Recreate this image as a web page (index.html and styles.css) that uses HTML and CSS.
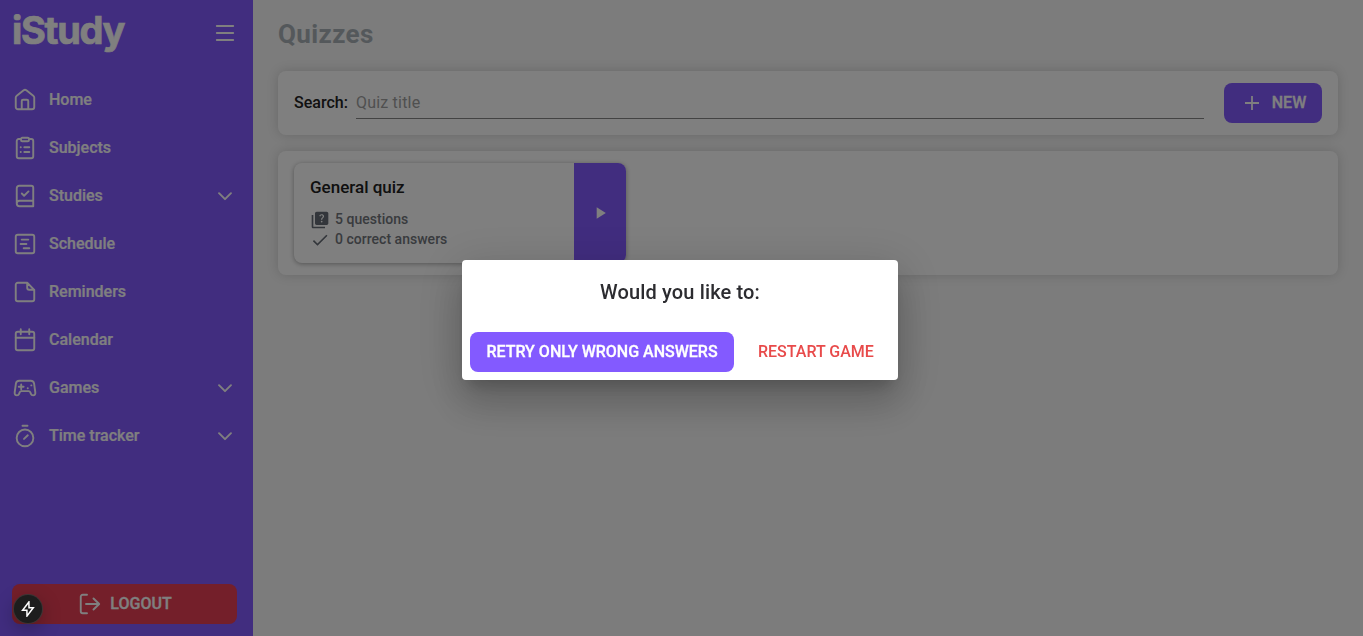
FILE: index.html
```html
<!DOCTYPE html>
<html lang="en">
<head>
<meta charset="utf-8">
<title>iStudy - Quizzes</title>
<link rel="stylesheet" href="styles.css">
</head>
<body>
<div class="app">
  <aside class="sidebar">
    <div class="brand">
      <span class="logo">iStudy</span>
      <svg class="menu" viewBox="0 0 24 24"><path d="M3.800 5h16.400M3.800 12h16.400M3.800 19h16.400"/></svg>
    </div>
    <nav class="nav">
      <a class="item"><svg viewBox="0 0 24 24"><path d="M2.750 9.600c0-.8.35-1.400 1-1.900l6.900-5.400c.8-.65 1.900-.65 2.700 0l6.900 5.400c.65.5 1 1.100 1 1.900v9.400c0 1.300-.95 2.250-2.250 2.250H5c-1.300 0-2.250-.95-2.250-2.250zM8.750 21v-7.900c0-.8.55-1.350 1.350-1.350h3.800c.8 0 1.350.55 1.350 1.350V21"/></svg><span>Home</span></a>
      <a class="item"><svg viewBox="0 0 24 24"><path d="M8 3H5.750a2 2 0 0 0-2 2v15.250a2 2 0 0 0 2 2h12.500a2 2 0 0 0 2-2V5a2 2 0 0 0-2-2H16M9.300 1.750h5.400c.8 0 1.300.5 1.300 1.300v.9c0 .8-.5 1.300-1.300 1.300H9.300c-.8 0-1.300-.5-1.300-1.300v-.9c0-.8.5-1.300 1.300-1.300zM11.300 11.200h5M11.300 16h5M7.700 11.200h.1M7.700 16h.1"/></svg><span>Subjects</span></a>
      <a class="item"><svg viewBox="0 0 24 24"><path d="M3.750 19.500V4.250a2.500 2.500 0 0 1 2.500-2.500h12a2 2 0 0 1 2 2v18.500H6.500a2.750 2.750 0 0 1 0-5.500h13.750M8.800 9.500l2.300 2.200 4.400-4.300"/></svg><span>Studies</span><svg class="chevron" viewBox="0 0 24 24"><path d="M6 9.200l6 6 6-6"/></svg></a>
      <a class="item"><svg viewBox="0 0 24 24"><rect x="2.750" y="2.750" width="18.500" height="18.500" rx="2"/><path d="M8.700 7.600h6.600M7.600 12h5.800M10.700 16.300h5.600"/></svg><span>Schedule</span></a>
      <a class="item"><svg viewBox="0 0 24 24"><path d="M14.200 2.750H4.750a2 2 0 0 0-2 2v14.500a2 2 0 0 0 2 2h14.500a2 2 0 0 0 2-2V9.800zM14.200 2.750v5.050a2 2 0 0 0 2 2h5.050"/></svg><span>Reminders</span></a>
      <a class="item"><svg viewBox="0 0 24 24"><rect x="2.750" y="3.750" width="18.500" height="18.500" rx="2"/><path d="M2.750 9.750h18.500M7.750 1.250v5M16.250 1.250v5"/></svg><span>Calendar</span></a>
      <a class="item"><svg viewBox="0 0 24 24"><path d="M6.200 4.750h11.600c1.800 0 3 1 3.300 2.800l1.200 8.700c.3 2.100-.7 3.100-2.200 3.100-1.100 0-1.800-.5-2.200-1.500l-.6-1.600c-.3-.8-.9-1.100-1.700-1.100H8.400c-.8 0-1.400.3-1.700 1.100l-.6 1.600c-.4 1-1.100 1.500-2.200 1.500-1.500 0-2.500-1-2.200-3.100l1.200-8.700c.3-1.800 1.500-2.800 3.300-2.800zM8.200 8.400v4.800M5.800 10.800h4.800M14.700 12.200h.1M18.300 9.400h.1"/></svg><span>Games</span><svg class="chevron" viewBox="0 0 24 24"><path d="M6 9.200l6 6 6-6"/></svg></a>
      <a class="item"><svg viewBox="0 0 24 24"><circle cx="12" cy="13.900" r="8.350"/><path d="M9.500 1.750h5M11 14.900l3.800-3.600"/></svg><span>Time tracker</span><svg class="chevron" viewBox="0 0 24 24"><path d="M6 9.200l6 6 6-6"/></svg></a>
    </nav>
    <button class="logout"><svg viewBox="0 0 24 24"><path d="M9 2.750H4.750a2 2 0 0 0-2 2v14.500a2 2 0 0 0 2 2H9M8 12h13M15.500 6.500L21.200 12l-5.700 5.500"/></svg><span>LOGOUT</span></button>
  </aside>
  <main class="content">
    <h1 class="title">Quizzes</h1>
    <section class="panel search">
      <label for="q">Search:</label>
      <input id="q" class="field" placeholder="Quiz title">
      <button class="new"><svg viewBox="0 0 24 24"><path d="M12 5v14M5 12h14"/></svg><span>NEW</span></button>
    </section>
    <section class="panel list">
      <article class="quiz">
        <div class="info">
          <h2>General quiz</h2>
          <p><svg viewBox="0 0 24 24"><path d="M4 6H2v14c0 1.100.9 2 2 2h14v-2H4V6zm16-4H8c-1.100 0-2 .9-2 2v12c0 1.100.9 2 2 2h12c1.100 0 2-.9 2-2V4c0-1.100-.9-2-2-2zm-5.990 13c-.590 0-1.050-.470-1.050-1.050 0-.590.470-1.040 1.050-1.040.590 0 1.040.450 1.040 1.040-.010.580-.450 1.050-1.040 1.050zm2.500-6.170c-.630.930-1.230 1.210-1.560 1.810-.130.240-.180.400-.180 1.180h-1.520c0-.410-.060-1.080.260-1.650.410-.730 1.180-1.160 1.630-1.800.480-.680.210-1.940-1.140-1.940-.880 0-1.320.670-1.500 1.230l-1.370-.570C11.510 5.960 12.520 5 13.990 5c1.230 0 2.080.560 2.510 1.260.370.610.580 1.730.010 2.570z"/></svg>5 questions</p>
          <p><svg viewBox="0 0 24 24" class="check"><path d="M9 16.200L4.800 12l-1.400 1.400L9 19 21 7l-1.400-1.400z"/></svg>0 correct answers</p>
        </div>
        <button class="play"><svg viewBox="0 0 24 24"><path d="M8 5v14l11-7z"/></svg></button>
      </article>
    </section>
  </main>
</div>
<div class="backdrop">
  <div class="dialog" role="dialog">
    <h2>Would you like to:</h2>
    <div class="actions">
      <button class="retry">RETRY ONLY WRONG ANSWERS</button>
      <button class="restart">RESTART GAME</button>
    </div>
  </div>
</div>
<div class="badge"><svg viewBox="0 0 16 16"><path d="M8.900 1L2.600 9.200h4.300L7 15l6.300-8.300H9z"/></svg></div>
</body>
</html>
```
FILE: styles.css
```css
* { box-sizing: border-box; }
body { margin: 0; font-family: Roboto, "Liberation Sans", sans-serif; overflow: hidden; }
button { border: 0; font: 500 16px/24px Roboto, sans-serif; }
h1, h2, p { margin: 0; }
svg { flex: none; display: block; }

.app { display: flex; height: 100vh; background: #f8f8f8; }

.sidebar {
  width: 253px;
  display: flex;
  flex-direction: column;
  padding: 0 16px 12px 13px;
  background: #835aff;
  color: #fff;
}
.sidebar svg {
  width: 24px;
  height: 24px;
  fill: none;
  stroke: currentColor;
  stroke-width: 1.9;
  stroke-linecap: round;
  stroke-linejoin: round;
}
.brand { height: 76px; display: flex; justify-content: space-between; padding-top: 7px; }
.logo {
  margin-left: -1px;
  font: 700 38px/46px Inter, sans-serif;
  letter-spacing: -1.3px;
  white-space: nowrap;
  -webkit-text-stroke: .7px #fff;
}
.sidebar .menu { width: 24px; margin-top: 14px; }
.nav { flex: 1; }
.item { height: 48px; display: flex; align-items: center; gap: 12px; font-size: 16px; line-height: 20px; font-weight: 500; }
.item span { flex: 1; -webkit-text-stroke: .2px; }
.logout {
  display: flex;
  align-items: center;
  justify-content: center;
  gap: 8px;
  height: 40px;
  margin-left: -1px;
  padding: 0 5px 0 6px;
  border-radius: 8px;
  background: #e83e55;
  color: #fff;
}
.logout span, .new span, .retry { -webkit-text-stroke: .3px; }

.content { flex: 1; padding: 16px 25px; }
.title { font-size: 26px; line-height: 36px; font-weight: 700; letter-spacing: .4px; color: #a8b1b6; }
.panel { border-radius: 8px; background: #fff; box-shadow: 0 0 12px rgba(0, 0, 0, .16); }
.search { height: 64px; margin: 19px 0 16px; padding: 0 16px; display: flex; align-items: center; font-size: 16px; font-weight: 480; color: #222; }
.search label { width: 54px; padding-bottom: 2px; white-space: nowrap; }
.field {
  flex: 1;
  height: 32px;
  margin: 0 20px 0 8px;
  padding: 0;
  border: 0;
  border-bottom: 1px solid #878787;
  background: none;
  font: 430 16px Roboto, sans-serif;
  letter-spacing: .2px;
}
.field::placeholder { color: #a0a0a0; opacity: 1; }
.new { width: 98px; height: 40px; display: flex; align-items: center; justify-content: center; gap: 8px; border-radius: 8px; background: #835aff; color: #fff; }
.new svg { width: 24px; fill: none; stroke: #fff; stroke-width: 1.8; }
.list { height: 124px; padding: 12px 16px; }
.quiz {
  width: 332px;
  height: 100px;
  display: flex;
  border-radius: 8px;
  overflow: hidden;
  box-shadow: 0 1px 5px rgba(0, 0, 0, .35);
}
.info { flex: 1; padding: 12px 16px; }
.info h2 { font-size: 17px; line-height: 24px; font-weight: 480; color: #212121; margin-bottom: 10px; }
.info p { display: flex; align-items: center; gap: 5px; font-size: 14px; line-height: 20px; font-weight: 490; letter-spacing: .02px; color: #72767c; }
.info svg { width: 20px; height: 20px; fill: #666d76; position: relative; top: 1px; }
.play { width: 52px; padding: 0; display: grid; place-items: center; background: #835aff; }
.play svg { width: 20px; fill: #fff; }

.backdrop {
  position: fixed;
  inset: 0;
  display: grid;
  place-items: center;
  padding: 4px 3px 0 0;
  background: rgba(0, 0, 0, .5);
}
.dialog {
  width: 436px;
  height: 120px;
  padding: 16px 8px 8px;
  border-radius: 4px;
  background: #fff;
  box-shadow: 0 11px 15px -7px rgba(0, 0, 0, .2), 0 24px 38px 3px rgba(0, 0, 0, .14), 0 9px 46px 8px rgba(0, 0, 0, .12);
}
.dialog h2 { font-size: 20px; line-height: 32px; font-weight: 490; letter-spacing: .15px; text-align: center; color: #2c2c30; }
.actions { display: flex; gap: 8px; margin-top: 24px; }
.actions button { height: 40px; padding: 0 16px; border-radius: 8px; white-space: nowrap; }
.retry { width: 264px; background: #835aff; color: #fff; }
.restart { background: none; color: #e84a4a; }

.badge {
  position: fixed;
  left: 14px;
  bottom: 13px;
  width: 28px;
  height: 28px;
  display: grid;
  place-items: center;
  border-radius: 50%;
  background: #1d1d1d;
  box-shadow: 0 0 0 1px #3d3535, 0 6px 20px rgba(0, 0, 0, .3);
}
.badge svg { width: 16px; fill: none; stroke: #fff; stroke-width: 1.5; }
```
